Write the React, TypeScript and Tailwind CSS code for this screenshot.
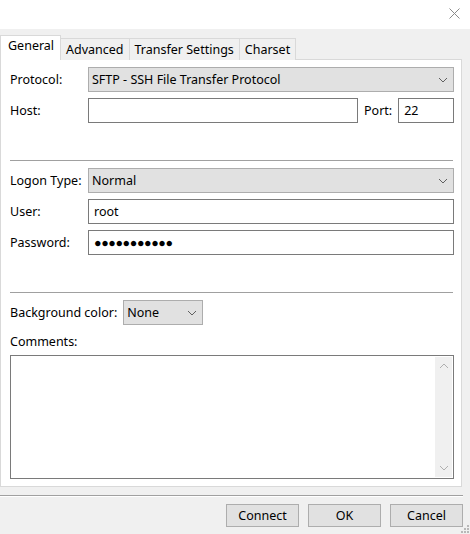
import React from "react";

const Chevron = ({ up = false, color = "#606060" }: { up?: boolean; color?: string }) => (
  <svg width="10" height="6" viewBox="0 0 10 6" className="shrink-0">
    <polyline
      points={up ? "1,5 5,1 9,5" : "1,1 5,5 9,1"}
      fill="none"
      stroke={color}
      strokeWidth="1"
    />
  </svg>
);

const Combo = ({ value, className }: { value: string; className: string }) => (
  <div
    className={`flex items-center h-[25px] bg-[#e1e1e1] border border-[#adadad] pl-[3px] pr-[5px] ${className}`}
  >
    <span className="flex-1 text-[12.5px] leading-none pt-[2px]">{value}</span>
    <Chevron />
  </div>
);

const TextBox = ({ value, className }: { value?: string; className: string }) => (
  <div
    className={`flex items-center h-[25px] bg-white border border-[#7a7a7a] pl-[5px] ${className}`}
  >
    <span className="text-[12.5px] leading-none pt-[2px]">{value}</span>
  </div>
);

const Label = ({ text, className = "w-[78px]" }: { text: string; className?: string }) => (
  <span className={`text-[12.5px] leading-none pt-[2px] shrink-0 ${className}`}>{text}</span>
);

export default function App() {
  const tabs = ["Advanced", "Transfer Settings", "Charset"];

  return (
    <div
      className="w-[470px] h-[534px] bg-[#f0f0f0] flex flex-col text-black relative overflow-hidden"
      style={{ fontFamily: '"Noto Sans", "Open Sans", sans-serif' }}
    >
      {/* title bar */}
      <div className="h-[29px] bg-white flex justify-end items-start pt-[8px] pr-[10px]">
        <svg width="11" height="11" viewBox="0 0 11 11">
          <path d="M0.5 0.5 L10.5 10.5 M10.5 0.5 L0.5 10.5" stroke="#8a8a8a" strokeWidth="1" fill="none" />
        </svg>
      </div>

      {/* tabs */}
      <div className="mt-[6px] flex items-end h-[25px] relative z-10">
        <div className="h-[25px] w-[61px] bg-white border border-b-0 border-[#d9d9d9] flex items-start pt-[4px] pl-[7px] text-[12.5px] leading-none">
          General
        </div>
        {tabs.map((t) => (
          <div
            key={t}
            className="h-[22px] -ml-px first:ml-0 px-[5px] pt-[2px] bg-[#f0f0f0] border border-b-0 border-[#d9d9d9] flex items-center text-[12.5px] leading-none"
          >
            {t}
          </div>
        ))}
      </div>

      {/* panel */}
      <div className="w-[462px] h-[428px] -mt-px bg-white border border-[#d9d9d9] flex flex-col pl-[9px] pr-[7px] pt-[7px]">
        <div className="flex items-center">
          <Label text="Protocol:" />
          <Combo value="SFTP - SSH File Transfer Protocol" className="flex-1" />
        </div>
        <div className="flex items-center mt-[6px]">
          <Label text="Host:" />
          <TextBox className="w-[270px]" />
          <span className="text-[12.5px] leading-none pt-[2px] ml-[6px] mr-[6px]">Port:</span>
          <TextBox value="22" className="flex-1" />
        </div>

        <div className="h-px bg-[#a0a0a0] mt-[37px] mr-px" />

        <div className="flex items-center mt-[7px]">
          <Label text="Logon Type:" />
          <Combo value="Normal" className="flex-1" />
        </div>
        <div className="flex items-center mt-[6px]">
          <Label text="User:" />
          <TextBox value="root" className="flex-1" />
        </div>
        <div className="flex items-center mt-[6px]">
          <Label text="Password:" />
          <TextBox value="●●●●●●●●●●●" className="flex-1 tracking-[-0.4px]" />
        </div>

        <div className="h-px bg-[#a0a0a0] mt-[37px] mr-px" />

        <div className="flex items-center mt-[7px]">
          <Label text="Background color:" className="mr-[6px]" />
          <Combo value="None" className="w-[80px]" />
        </div>
        <div className="mt-[9px] pt-[2px] text-[12.5px] leading-none h-[13px]">Comments:</div>
        <div className="mt-[8px] h-[124px] bg-white border border-[#7a7a7a] flex justify-end p-px">
          <div className="w-[17px] bg-[#f0f0f0] flex flex-col justify-between items-center py-[6px]">
            <Chevron up color="#b0b0b0" />
            <Chevron color="#b0b0b0" />
          </div>
        </div>
      </div>

      {/* bottom separator */}
      <div className="mt-[8px] h-px w-[463px] bg-[#a0a0a0]" />
      <div className="h-px w-[463px] bg-white" />

      {/* buttons */}
      <div className="flex justify-end gap-[9px] mt-[7px] pr-[7px]">
        {["Connect", "OK", "Cancel"].map((b) => (
          <div
            key={b}
            className="w-[73px] h-[23px] pt-[2px] bg-[#e1e1e1] border border-[#adadad] flex items-center justify-center text-[12.5px] leading-none"
          >
            {b}
          </div>
        ))}
      </div>

      {/* resize grip */}
      <svg width="8" height="8" viewBox="0 0 8 8" className="absolute right-[1px] bottom-[1px]">
        <rect x="6" y="0" width="2" height="2" fill="#b8b8b8" />
        <rect x="3" y="3" width="2" height="2" fill="#b8b8b8" />
        <rect x="6" y="3" width="2" height="2" fill="#b8b8b8" />
        <rect x="0" y="6" width="2" height="2" fill="#b8b8b8" />
        <rect x="3" y="6" width="2" height="2" fill="#b8b8b8" />
        <rect x="6" y="6" width="2" height="2" fill="#b8b8b8" />
      </svg>
    </div>
  );
}
